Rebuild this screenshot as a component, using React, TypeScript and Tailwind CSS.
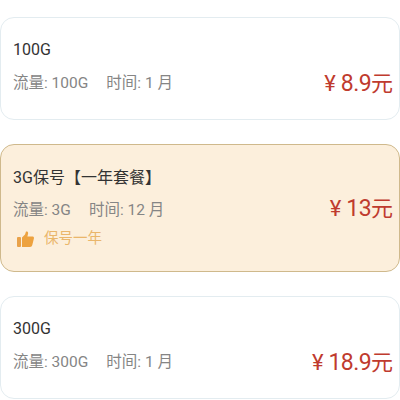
import React from 'react';

interface PlanInterface {
    name: string;
    traffic: string;
    months: string;
    price: string;
    note?: string;
}

const plans: PlanInterface[] = [
    { name: '100G', traffic: '100G', months: '1', price: '8.9' },
    { name: '3G保号【一年套餐】', traffic: '3G', months: '12', price: '13', note: '保号一年' },
    { name: '300G', traffic: '300G', months: '1', price: '18.9' },
];

const ThumbIcon = () => (
    <svg width="17" height="16" viewBox="0 0 17 16">
        <rect x="0" y="6" width="4" height="10" rx="1" fill="#e9a24a" />
        <path d="M5 6.5 L8 3.5 L9 0.5 C10.5 0 11.5 1.2 11 3 L10.4 5.5 L15.5 5.5 C16.6 5.5 17.2 6.4 16.9 7.5 L15.3 14 C15 15.2 14.2 16 13 16 L5 16 Z" fill="#eda23f" />
    </svg>
);

const PlanCard: React.FC<{ plan: PlanInterface }> = ({ plan }) => {
    const selected = !!plan.note;

    return (
        <div className={`flex flex-col justify-center w-full rounded-[14px] border pl-[12px] pr-[6px] ${selected ? 'h-[128px] bg-[#fcefdc] border-[#cfb98c]' : 'h-[103px] bg-white border-[#e3ecf0]'}`}>
            <p className={`text-[16px] leading-[24px] text-[#333333] ${selected ? 'mt-[-2px]' : ''}`}>{plan.name}</p>
            <div className={`flex items-center justify-between h-[30px] ${selected ? 'mt-[6px]' : 'mt-[7px]'}`}>
                <p className="text-[15.5px] text-[#858585] whitespace-pre">{`流量: ${plan.traffic}`}<span className="ml-[18px]">{`时间: ${plan.months} 月`}</span></p>
                <p className={`flex items-baseline text-[#bf3b2e] leading-[30px] ${selected ? 'mt-[-3px]' : 'mt-[-1px]'}`}>
                    <span className="text-[22px] mr-[5px]">¥</span>
                    <span className="text-[23px] tracking-[-0.6px]">{plan.price}</span>
                    <span className="text-[22px]">元</span>
                </p>
            </div>
            {plan.note && (
                <div className="flex items-center mt-[3px] ml-[4px]">
                    <ThumbIcon />
                    <span className="ml-[10px] text-[14.5px] leading-[20px] text-[#eab66b]">{plan.note}</span>
                </div>
            )}
        </div>
    );
};

export default function App() {
    return (
        <div className="w-[400px] h-[400px] overflow-hidden bg-white pt-[17px] flex flex-col gap-[24px]" style={{ fontFamily: 'Roboto, "Noto Sans CJK SC", sans-serif' }}>
            {plans.map((plan) => (
                <PlanCard key={plan.name} plan={plan} />
            ))}
        </div>
    );
}
